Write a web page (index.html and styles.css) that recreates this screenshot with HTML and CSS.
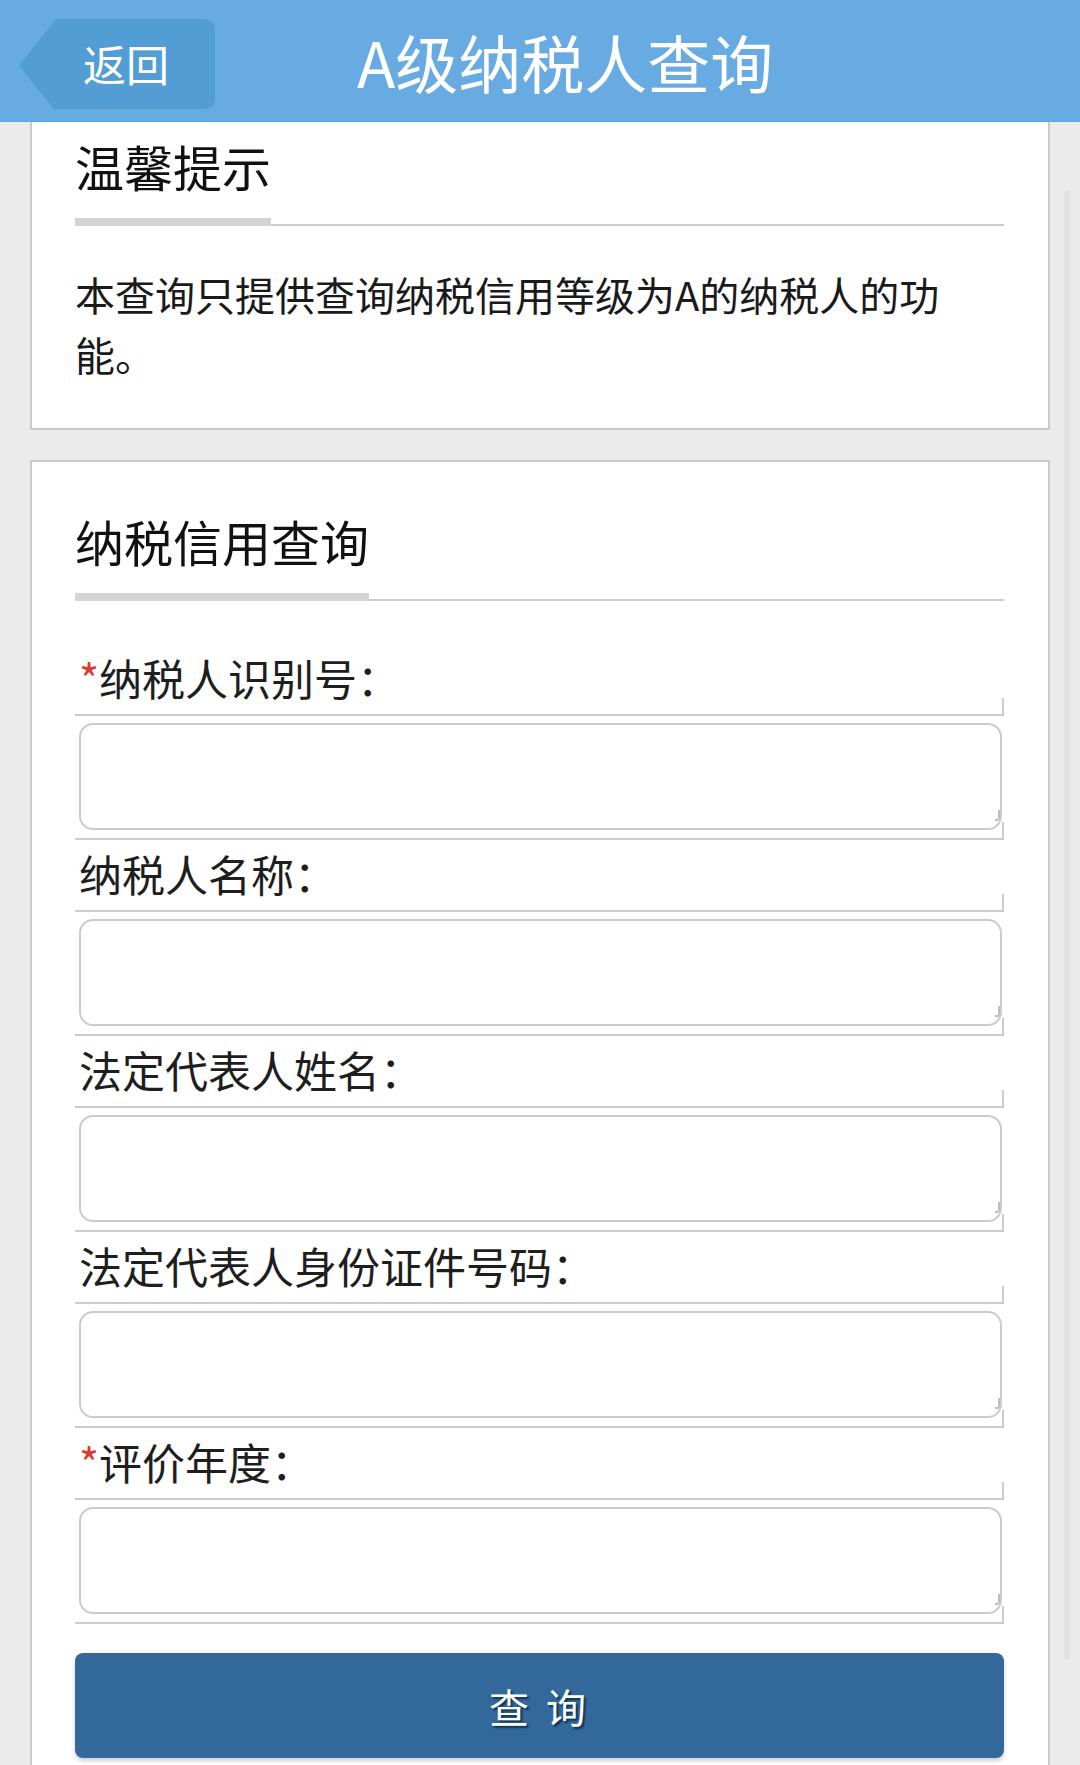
FILE: index.html
```html
<!DOCTYPE html>
<html lang="zh-CN">
<head>
<meta charset="utf-8">
<title>A级纳税人查询</title>
<link rel="stylesheet" href="styles.css">
</head>
<body>
<header class="topbar">
  <a class="back-btn">返回</a>
  <h1 class="page-title">A级纳税人查询</h1>
</header>
<main class="content">
  <section class="card card-tip">
    <div class="sec-title"><span>温馨提示</span></div>
    <p class="tip-text">本查询只提供查询纳税信用等级为A的纳税人的功能。</p>
  </section>
  <section class="card card-form">
    <div class="sec-title"><span>纳税信用查询</span></div>
    <div class="fields">
      <div class="field-label"><em class="req">*</em>纳税人识别号：</div>
      <div class="field-input"><input type="text"></div>
      <div class="field-label">纳税人名称：</div>
      <div class="field-input"><input type="text"></div>
      <div class="field-label">法定代表人姓名：</div>
      <div class="field-input"><input type="text"></div>
      <div class="field-label">法定代表人身份证件号码：</div>
      <div class="field-input"><input type="text"></div>
      <div class="field-label"><em class="req">*</em>评价年度：</div>
      <div class="field-input"><input type="text"></div>
    </div>
    <button class="query-btn" type="button">查 询</button>
  </section>
</main>
<div class="scroll-track"></div>
</body>
</html>
```

FILE: styles.css
```css
* { box-sizing: border-box; }

html, body {
  margin: 0;
  padding: 0;
}

body {
  width: 1080px;
  height: 1765px;
  overflow: hidden;
  background: #ebebeb;
  font-family: "Noto Sans CJK SC", "Noto Sans", sans-serif;
  color: #1a1a1a;
  position: relative;
}

.topbar {
  height: 122px;
  background: #67abe2;
  display: flex;
  align-items: flex-start;
  padding: 19px 0 0 19px;
  border-bottom: 1px solid #5fa3db;
}

.back-btn {
  width: 196px;
  height: 93px;
  display: flex;
  align-items: center;
  padding: 0 0 4px 64px;
  background: #529ed4;
  border-radius: 0 10px 10px 0;
  clip-path: polygon(37px 0, 100% 0, 100% 100%, 37px 100%, 0 50%);
  color: #fff;
  font-size: 43px;
  font-weight: 400;
  line-height: 1;
  box-shadow: inset 0 -3px 0 #64aade;
}

.page-title {
  margin: 0 0 0 142px;
  align-self: center;
  margin-top: -19px;
  font-size: 63px;
  font-weight: 400;
  color: #fff;
  line-height: 1;
}

.content {
  padding: 0 30px;
}

.card {
  background: #fff;
  border: 2px solid #c9c9c9;
  padding: 0 44px 0 43px;
}

.card-tip {
  border-top: none;
  padding-top: 20px;
  padding-bottom: 44px;
}

.card-form {
  margin-top: 30px;
  padding-top: 55px;
  padding-bottom: 40px;
}

.sec-title {
  display: flex;
  border-bottom: 2px solid #cccccc;
}

.sec-title span {
  display: block;
  font-size: 49px;
  line-height: 48px;
  color: #111;
  padding-bottom: 28px;
  border-bottom: 8px solid #d3d3d3;
  margin-bottom: -2px;
}

.tip-text {
  margin: 38px 0 0;
  font-size: 40px;
  line-height: 60px;
  color: #1a1a1a;
}

.fields {
  margin-top: 43px;
}

.field-label {
  position: relative;
  font-size: 43px;
  line-height: 50px;
  padding: 8px 0 12px 4px;
  border-bottom: 2px solid #cccccc;
  color: #1e1e1e;
}

.req {
  font-style: normal;
  color: #e2392f;
}

.field-input {
  position: relative;
  padding: 7px 2px 8px 4px;
  border-bottom: 2px solid #cccccc;
}

.field-label::after,
.field-input::after {
  content: "";
  position: absolute;
  right: 0;
  bottom: 0;
  width: 2px;
  height: 16px;
  background: #cccccc;
}

.field-input::before {
  content: "";
  position: absolute;
  right: 4px;
  bottom: 17px;
  width: 3px;
  height: 9px;
  border-right: 2px solid #bdbdbd;
  border-bottom: 2px solid #bdbdbd;
  border-bottom-right-radius: 3px;
}

.field-input input {
  display: block;
  width: 100%;
  height: 107px;
  border: 2px solid #cbcbcb;
  border-radius: 14px;
  background: #fff;
  font-family: inherit;
  font-size: 40px;
  padding: 0 16px;
  outline: none;
}

.query-btn {
  display: block;
  width: 100%;
  height: 105px;
  margin-top: 29px;
  border: none;
  border-radius: 8px;
  background: #33689b;
  color: #fff;
  font-family: inherit;
  font-size: 40px;
  letter-spacing: 4px;
  text-shadow: 2px 2px 2px #10304f;
  box-shadow: 0 3px 4px rgba(0, 0, 0, 0.18);
}

.scroll-track {
  position: absolute;
  top: 190px;
  right: 10px;
  width: 6px;
  height: 1470px;
  background: #e1e1e1;
  border-radius: 3px;
}
```
